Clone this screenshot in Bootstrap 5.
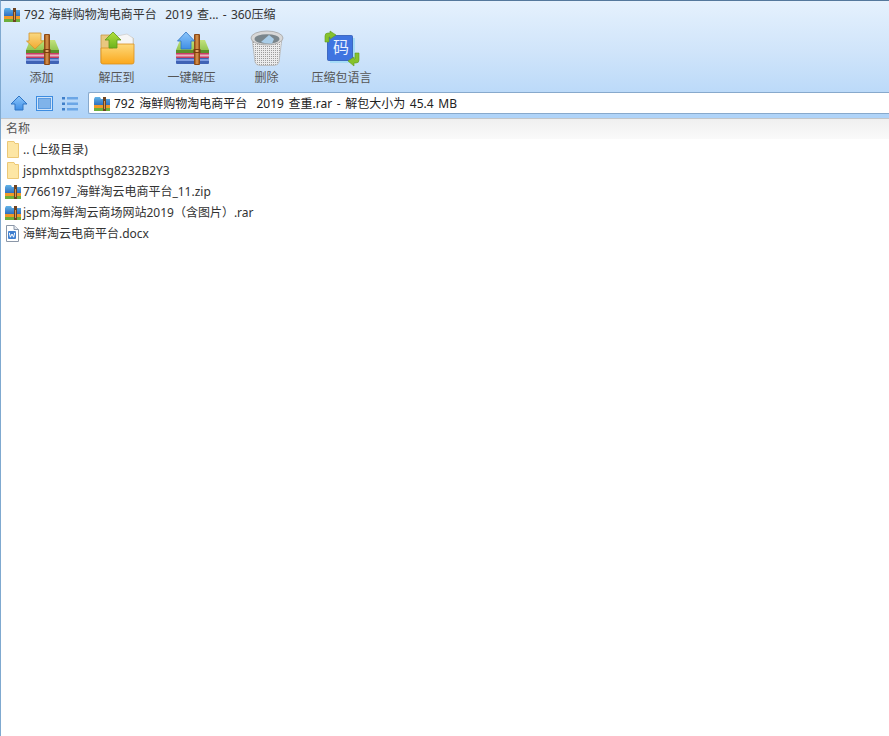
<!DOCTYPE html>
<html lang="zh-CN">
<head>
  <meta charset="UTF-8" />
  <meta name="viewport" content="width=device-width, initial-scale=1.0" />
  <title>360压缩</title>
  <link href="https://cdn.jsdelivr.net/npm/bootstrap@5.3.2/dist/css/bootstrap.min.css" rel="stylesheet" />
  <style>
    html, body { height: 100%; }
    body {
      font-family: "Noto Sans", "Noto Sans CJK SC", sans-serif;
      font-size: 12px;
      color: #222;
      background: #fff;
      overflow: hidden;
    }
    .app-window { height: 100vh; border-left: 1px solid #7fa9d0; }
    .app-top {
      height: 118px;
      margin-left: -1px;
      border-top: 1px solid #54789c;
      border-left: 1px solid #7fa9d0;
      background: linear-gradient(#e5f1fd, #cfe4fa 45%, #afd3f8);
    }
    .title-row { height: 27px; padding-left: 3px; gap: 4px; color: #333; line-height: 1; white-space: pre; word-spacing: 1.1px; }
    .tool-row { height: 64px; padding-left: 3px; }
    .tool-item { width: 75px; color: #555; }
    .tool-item svg { display: block; height: 40px; width: 40px; }
    .tool-label { margin-top: 2px; line-height: 16px; white-space: nowrap; }
    .addr-row { padding-left: 9px; }
    .nav-icons { width: 78px; gap: 8px; }
    .addr-box {
      height: 22px;
      padding-left: 5px;
      padding-top: 1px;
      gap: 4px;
      background: #fff;
      border: 1px solid #87a9cc;
      border-right: 0;
      border-radius: 2px 0 0 2px;
      white-space: pre;
      word-spacing: 1.5px;
    }
    .list-head {
      height: 21px;
      padding-left: 5px;
      color: #555;
      border-top: 1px solid #c3c6c9;
      background: linear-gradient(#f0f0f0, #fafafa);
    }
    .file-row { height: 21px; padding-left: 4px; gap: 2px; white-space: pre; color: #333; }
    .file-row svg { flex: none; }
  </style>
</head>
<body>

  <svg width="0" height="0" class="position-absolute">
    <defs>
      <linearGradient id="rar-blue" x1="0" y1="0" x2="0" y2="1">
        <stop offset="0" stop-color="#62b4e8"/>
        <stop offset="1" stop-color="#2f6fc0"/>
      </linearGradient>
      <linearGradient id="lid-green" x1="0" y1="0" x2="0" y2="1">
        <stop offset="0" stop-color="#c3e27c"/>
        <stop offset="1" stop-color="#86bd45"/>
      </linearGradient>
      <linearGradient id="arrow-gold" x1="0" y1="0" x2="0" y2="1">
        <stop offset="0" stop-color="#f9d982"/>
        <stop offset="1" stop-color="#f3a92f"/>
      </linearGradient>
      <linearGradient id="arrow-sky" x1="0" y1="0" x2="0" y2="1">
        <stop offset="0" stop-color="#8cc6fb"/>
        <stop offset="1" stop-color="#3f8fe6"/>
      </linearGradient>
      <linearGradient id="arrow-leaf" x1="0" y1="0" x2="0" y2="1">
        <stop offset="0" stop-color="#b4e03c"/>
        <stop offset="1" stop-color="#6cb31e"/>
      </linearGradient>
      <linearGradient id="folder-front" x1="0" y1="0" x2="0" y2="1">
        <stop offset="0" stop-color="#fdd97c"/>
        <stop offset="1" stop-color="#fba81c"/>
      </linearGradient>
      <!-- 压缩包小图标 -->
      <symbol id="rar-small" viewBox="0 0 16 16">
        <path d="M0 3 1 1h5l1 2h9v6H0z" fill="url(#rar-blue)"/>
        <rect x="0" y="9" width="16" height="3" fill="#f09a28"/>
        <rect x="0" y="12" width="16" height="3" fill="#6cae3c"/>
        <rect x="9" y="1" width="3" height="14" fill="#6e4320"/>
        <rect x="10" y="5" width="1" height="8" fill="#d89a55"/>
      </symbol>
      <symbol id="folder-small" viewBox="0 0 16 17">
        <path d="M2.500 .5H9l1 2h3.500v14h-11z" fill="#fde6a5" stroke="#ecc877"/>
      </symbol>
      <symbol id="doc-small" viewBox="0 0 16 17">
        <path d="M1.500 .5H9l4.500 4v12h-12z" fill="#fff" stroke="#8b97a8"/>
        <path d="M9 .5v4h4.500" fill="#e5e9ef" stroke="#8b97a8"/>
        <rect x="3" y="6" width="8" height="8" rx="1" fill="#3f7fd0"/>
        <path d="M4.300 7.800 5.400 12.200 7 9 8.600 12.200 9.700 7.800" fill="none" stroke="#fff" stroke-width="1"/>
      </symbol>
      <!-- 书本样式的压缩包 -->
      <symbol id="book" viewBox="0 0 40 40">
        <rect x="4" y="30" width="33" height="6" rx="1" fill="#3f62b5"/>
        <rect x="4" y="31" width="33" height="2" fill="#7d9be0"/>
        <rect x="4" y="25" width="33" height="5" fill="#c83d63"/>
        <rect x="4" y="26.500" width="33" height="2" fill="#eab4c2"/>
        <path d="M8 12h25l4 10v3H4v-3z" fill="url(#lid-green)"/>
        <rect x="4" y="22" width="33" height="3" fill="#5c8f2a"/>
        <rect x="22" y="6" width="6" height="31" rx="1" fill="#8e4a16"/>
        <rect x="23.500" y="7" width="3" height="29" fill="#cf8a44"/>
        <rect x="21.500" y="21" width="7" height="4" fill="#7a3d10"/>
        <rect x="23.500" y="22" width="3" height="2" fill="#e2a665"/>
      </symbol>
    </defs>
  </svg>

  <div class="app-window d-flex flex-column">
    <div class="app-top flex-shrink-0">
      <div class="title-row d-flex align-items-center">
        <svg width="16" height="16"><use href="#rar-small"/></svg>
        <span>792 海鲜购物淘电商平台  2019 查... - 360压缩</span>
      </div>

      <div class="tool-row d-flex">
        <div class="tool-item d-flex flex-column align-items-center">
          <svg viewBox="0 0 40 40">
            <use href="#book"/>
            <path d="M7 5h12v8h2.500L13 21 4.500 13H7z" fill="url(#arrow-gold)" stroke="#d2932f" stroke-width=".8"/>
          </svg>
          <div class="tool-label">添加</div>
        </div>
        <div class="tool-item d-flex flex-column align-items-center">
          <svg viewBox="0 0 40 40">
            <path d="M4 7h9l2 3h21v25H4z" fill="#e8c77f" stroke="#c99a44" stroke-width=".8"/>
            <path d="M15 9l15-3 6 4v10H15z" fill="#f6f6f6" stroke="#cfcfcf" stroke-width=".8"/>
            <path d="M4 20h12l3-4h18v18a2 2 0 0 1-2 2H6a2 2 0 0 1-2-2z" fill="url(#folder-front)" stroke="#d99020" stroke-width=".8"/>
            <path d="M16 4 24 12h-4v8h-8v-8H8z" fill="url(#arrow-leaf)" stroke="#5f9a1c" stroke-width=".8"/>
          </svg>
          <div class="tool-label">解压到</div>
        </div>
        <div class="tool-item d-flex flex-column align-items-center">
          <svg viewBox="0 0 40 40">
            <use href="#book"/>
            <path d="M14 4 22.500 13H19v8H9v-8H5.500z" fill="url(#arrow-sky)" stroke="#2f74c4" stroke-width=".8"/>
          </svg>
          <div class="tool-label">一键解压</div>
        </div>
        <div class="tool-item d-flex flex-column align-items-center">
          <svg viewBox="0 0 40 40">
            <defs>
              <pattern id="bin-mesh" width="2" height="2" patternUnits="userSpaceOnUse">
                <rect width="2" height="2" fill="#ececec"/>
                <rect width="1" height="1" fill="#9c9c9c"/>
              </pattern>
            </defs>
            <path d="M5 10 8 34q1 3.500 5 3.500h14q4 0 5-3.500l3-24z" fill="url(#bin-mesh)" stroke="#b5b5b5" stroke-width=".8"/>
            <ellipse cx="20" cy="10" rx="16" ry="7" fill="#d8d8d8" stroke="#a3a3a3" stroke-width=".8"/>
            <ellipse cx="20" cy="11" rx="12.500" ry="4.800" fill="#7a868c"/>
            <path d="M14 14l8-7 5 4-2 4.500q-6 .5-11-1.500z" fill="#a9cde8"/>
          </svg>
          <div class="tool-label">删除</div>
        </div>
        <div class="tool-item d-flex flex-column align-items-center">
          <svg viewBox="0 0 40 40">
            <rect x="8" y="10" width="25" height="25" fill="#a6dcf7"/>
            <rect x="5.500" y="7.500" width="25" height="25" rx="1" fill="#3f74e0" stroke="#2f59b5" stroke-width=".8"/>
            <text x="19" y="25" font-size="16" text-anchor="middle" fill="#e8f0ff" font-family="Noto Sans CJK SC, sans-serif">码</text>
            <path d="M3 14V8q0-3 3-3h2V3l6 4-6 4V9H7v5z" fill="#86c22c" stroke="#5f9a1c" stroke-width=".6"/>
            <path d="M37 25v7q0 3-3 3h-2v3l-6-5 6-4v2h1v-6z" fill="#86c22c" stroke="#5f9a1c" stroke-width=".6"/>
          </svg>
          <div class="tool-label">压缩包语言</div>
        </div>
      </div>

      <div class="addr-row d-flex align-items-center">
        <div class="nav-icons d-flex align-items-center flex-shrink-0">
          <svg width="18" height="16" viewBox="0 0 18 16">
            <path d="M9 1 17 9h-4v6H5V9H1z" fill="url(#arrow-sky)" stroke="#2f74c4"/>
          </svg>
          <svg width="17" height="15" viewBox="0 0 17 15">
            <rect x=".5" y=".5" width="16" height="14" fill="#cfe3f8" stroke="#3d8ce0"/>
            <rect x="2.500" y="2.500" width="12" height="10" fill="#7fb3ea" stroke="#5a9ae0"/>
          </svg>
          <svg width="17" height="15" viewBox="0 0 17 15">
            <g fill="#3f7fc9">
              <rect x="1" y="1" width="3" height="2.500"/>
              <rect x="1" y="6.500" width="3" height="2.500"/>
              <rect x="1" y="12" width="3" height="2.500"/>
            </g>
            <g fill="#6ba6e6">
              <rect x="6" y="1" width="11" height="2.500"/>
              <rect x="6" y="6.500" width="11" height="2.500"/>
              <rect x="6" y="12" width="11" height="2.500"/>
            </g>
          </svg>
        </div>
        <div class="addr-box d-flex align-items-center flex-grow-1">
          <svg width="16" height="16" class="flex-shrink-0"><use href="#rar-small"/></svg>
          <span>792 海鲜购物淘电商平台  2019 查重.rar - 解包大小为 45.4 MB</span>
        </div>
      </div>
    </div>

    <div class="list-head d-flex align-items-center flex-shrink-0">名称</div>

    <div class="file-list flex-grow-1">
      <div class="file-row d-flex align-items-center">
        <svg width="16" height="17"><use href="#folder-small"/></svg>
        <span>.. (上级目录)</span>
      </div>
      <div class="file-row d-flex align-items-center">
        <svg width="16" height="17"><use href="#folder-small"/></svg>
        <span>jspmhxtdspthsg8232B2Y3</span>
      </div>
      <div class="file-row d-flex align-items-center">
        <svg width="16" height="16"><use href="#rar-small"/></svg>
        <span>7766197_海鲜淘云电商平台_11.zip</span>
      </div>
      <div class="file-row d-flex align-items-center">
        <svg width="16" height="16"><use href="#rar-small"/></svg>
        <span>jspm海鲜淘云商场网站2019（含图片）.rar</span>
      </div>
      <div class="file-row d-flex align-items-center">
        <svg width="16" height="17"><use href="#doc-small"/></svg>
        <span>海鲜淘云电商平台.docx</span>
      </div>
    </div>
  </div>

  <script src="https://cdn.jsdelivr.net/npm/bootstrap@5.3.2/dist/js/bootstrap.bundle.min.js"></script>
</body>
</html>
